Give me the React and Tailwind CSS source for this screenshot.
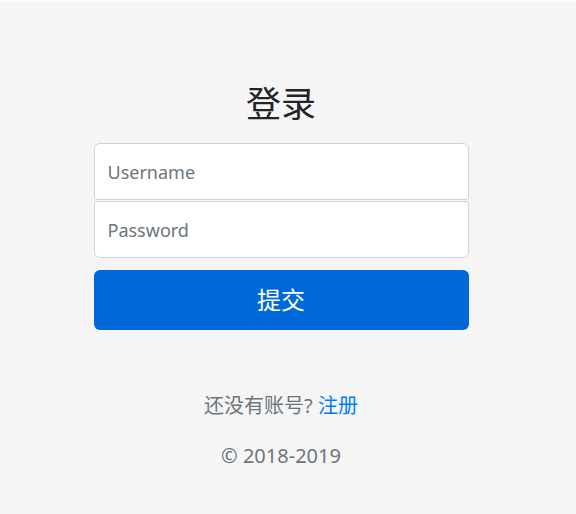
export default function App() {
  const font = { fontFamily: '"Noto Sans", "Noto Sans CJK SC", sans-serif' };
  return (
    <div className="min-h-[514px] w-[576px] bg-[#f5f5f5] text-[#212529]" style={font}>
      <div className="h-[2px] bg-[#fdfdf4]" />
      <div className="w-[562px] flex flex-col items-center pt-[81px]">
        <h1 className="text-[35px] leading-[42px] font-normal m-0 mb-[18px]">登录</h1>
        <form className="w-[375px] flex flex-col">
          <input
            type="text"
            placeholder="Username"
            className="h-[57px] w-full bg-white border border-[#ced4da] rounded-t-[6px] rounded-b-[3px] px-[13px] text-[18px] placeholder:text-[#6c757d] outline-none"
          />
          <input
            type="password"
            placeholder="Password"
            className="h-[57px] w-full mt-[1px] bg-white border border-[#ced4da] rounded-b-[6px] rounded-t-[3px] px-[13px] text-[18px] placeholder:text-[#6c757d] outline-none"
          />
          <button
            type="button"
            className="mt-[12px] h-[60px] w-full bg-[#0069d9] text-white rounded-[6px] text-[24px]"
          >
            提交
          </button>
        </form>
        <p className="mt-[63px] text-[20px] leading-[26px] text-[#6c757d]">
          还没有账号? <a className="text-[#007bff]" href="#">注册</a>
        </p>
        <p className="mt-[24px] text-[20px] leading-[26px] text-[#6c757d]">© 2018-2019</p>
      </div>
    </div>
  );
}
